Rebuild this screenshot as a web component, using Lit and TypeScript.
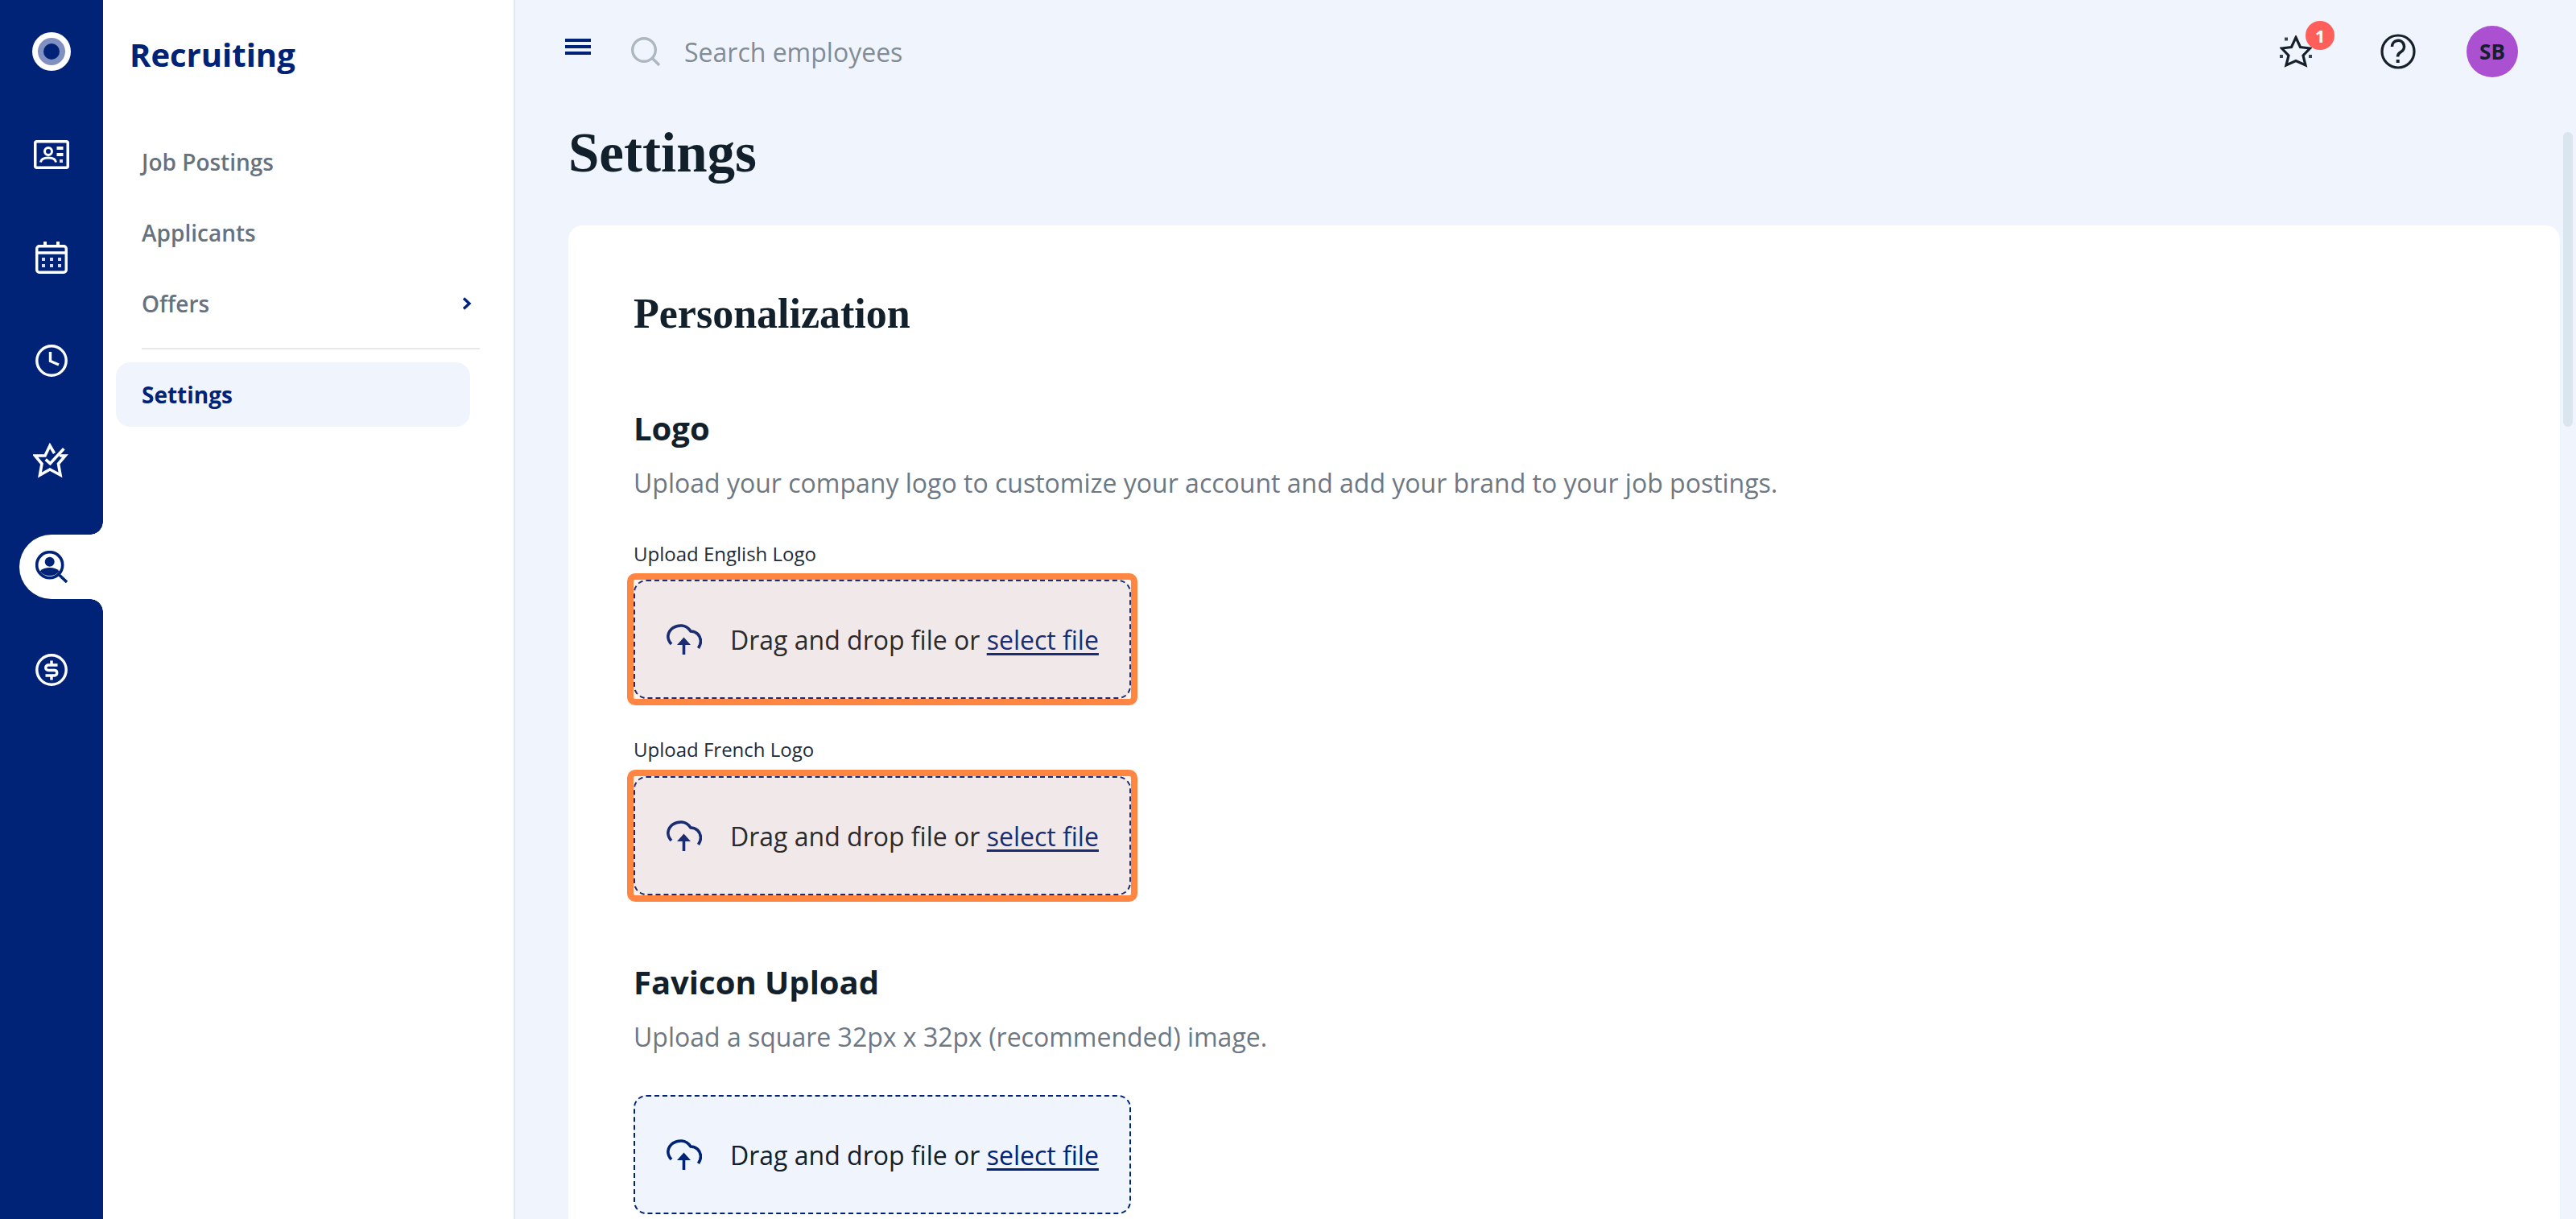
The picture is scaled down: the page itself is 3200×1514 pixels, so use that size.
import { LitElement, html, css } from "lit";
import { customElement } from "lit/decorators.js";

const navy = "#002378";

const logo = html`<svg width="48" height="48" viewBox="0 0 48 48"><circle cx="24" cy="24" r="24" fill="#fff"/><circle cx="24" cy="24" r="17" fill="#8090c0"/><circle cx="24" cy="24" r="10" fill="${navy}"/></svg>`;

const card = html`<svg width="44" height="36" viewBox="0 0 44 36" fill="none" stroke="#fff"><rect x="1.75" y="1.75" width="40.5" height="32.5" rx="2" stroke-width="3.5"/><circle cx="18" cy="14" r="4.5" stroke-width="3"/><path d="M8.5 27.5C9 23.5 12.5 22 18 22s9 1.5 9.5 5.5" stroke-width="3"/><path d="M28.5 10h8M28.5 18h8" stroke-width="4"/><rect x="32" y="24" width="4" height="4" fill="#dfe4f0" stroke="none"/></svg>`;

const calendar = html`<svg width="40" height="40" viewBox="0 0 40 40" fill="none" stroke="#fff"><rect x="1.75" y="5.75" width="36.5" height="32.5" rx="3" stroke-width="3.4"/><path d="M1.75 14h36.5" stroke-width="3.4"/><path d="M12 0v6M28 0v6" stroke-width="4"/><g fill="#d4daea" stroke="none"><rect x="8" y="20" width="4" height="4"/><rect x="18" y="20" width="4" height="4"/><rect x="28" y="20" width="4" height="4"/><rect x="8" y="28" width="4" height="4"/><rect x="18" y="28" width="4" height="4"/><rect x="28" y="28" width="4" height="4"/></g></svg>`;

const clock = html`<svg width="40" height="40" viewBox="0 0 40 40" fill="none" stroke="#fff" stroke-width="3.4"><circle cx="20" cy="20" r="18.2"/><path d="M18.5 9v11.5l10.5 4.5"/></svg>`;

const starCheck = html`<svg width="44" height="44" viewBox="0 0 44 44" fill="none" stroke="#fff" stroke-width="3.6"><path d="M26.5 13 21 3.5 15 16H2.5L11 26 8.5 40 21 33l13 7-2.5-14L40 16h-7"/><path d="M15.7 20.7l5.6 5L38.3 7.3"/></svg>`;

const personSearch = html`<svg width="40" height="40" viewBox="0 0 40 40" fill="none" stroke="${navy}"><circle cx="17.7" cy="17.7" r="16" stroke-width="3.6"/><circle cx="17.7" cy="13.7" r="6" fill="${navy}" stroke="none"/><path d="M5.5 25.5C9 22 13 21 17.7 21s8.7 1 12.2 4.5A16 16 0 0 1 5.5 25.5Z" fill="${navy}" stroke="none"/><path d="M29.5 30l9.5 9" stroke-width="3.6"/></svg>`;

const dollar = html`<svg width="40" height="40" viewBox="0 0 40 40" fill="none" stroke="#fff" stroke-width="3.4"><circle cx="20" cy="20" r="18.2"/><path d="M27.5 14H16a3 3 0 0 0 0 6.5h8a3.3 3.3 0 0 1 0 6.5H12.5"/><path d="M20 8.5V14M20 27v5.5"/></svg>`;

const chevron = html`<svg width="12" height="16" viewBox="0 0 12 16" fill="none" stroke="${navy}" stroke-width="3.4"><path d="M2 1.5 9 8l-7 6.5"/></svg>`;

const menu = html`<svg width="32" height="20" viewBox="0 0 32 20" fill="${navy}"><rect width="32" height="4"/><rect y="8" width="32" height="4"/><rect y="16" width="32" height="4"/></svg>`;

const search = html`<svg width="36" height="36" viewBox="0 0 36 36" fill="none" stroke="#aeb7bf" stroke-width="3.4"><circle cx="16" cy="16" r="14.3"/><path d="M26.5 26.5 35 35"/></svg>`;

const star = html`<svg width="40" height="40" viewBox="0 0 40 40" fill="none" stroke="#15202b" stroke-width="3.2"><path d="M20 2.5 25.5 14.5 37.5 16 29 25l3 12-12-5.5L8 37l3-12-8.5-9 12-1.5Z"/><g fill="#3a4650" stroke="none"><rect x="6" y="2.5" width="4" height="4"/><rect x="0" y="24" width="4" height="4"/><rect x="36" y="24" width="4" height="4"/></g></svg>`;

const help = html`<svg width="44" height="44" viewBox="0 0 44 44" fill="none" stroke="#15202b" stroke-width="3.2"><circle cx="22" cy="22" r="20"/><path d="M14.5 16a7.5 7.5 0 1 1 11 6.5c-3 1.7-4 3-4 6" stroke-width="3.6"/><rect x="19.7" y="32" width="4" height="4" fill="#15202b" stroke="none"/></svg>`;

const upload = html`<svg width="44" height="38" viewBox="0 0 44 38" fill="none" stroke="currentColor" stroke-width="3.6"><path d="M6 25C2.5 21 1.5 17 2 14 3.5 6 11 1.5 19 2c6 .5 9 4 11 7 7 0 12 5 12.5 12 0 4-1 6-3 9"/><path d="M21.5 38V22" stroke-width="3.6"/><path d="M21.5 16.5 30 26H13Z" fill="currentColor" stroke="none"/></svg>`;

@customElement("app-root")
export class AppRoot extends LitElement {
  static styles = css`
    :host { display: block; font-family: "Open Sans", sans-serif; color: #12202b; }
    .root { display: flex; height: 1514px; width: 3200px; overflow: hidden; background: #fff; }

    .rail { width: 128px; flex: none; background: #002378; box-sizing: border-box; padding-top: 24px; display: flex; flex-direction: column; gap: 48px; }
    .rail-item { height: 80px; display: flex; align-items: center; justify-content: center; position: relative; flex: none; }
    .rail-item.star svg { margin-top: -8px; margin-left: -2px; }
    .rail-item.active { background: #fff; margin-left: 24px; border-radius: 40px 0 0 40px; justify-content: flex-start; padding-left: 20px; }
    .rail-item.active::before, .rail-item.active::after { content: ""; position: absolute; right: 0; width: 16px; height: 16px; }
    .rail-item.active::before { top: -16px; background: radial-gradient(circle at 0 0, transparent 15.5px, #fff 16px); }
    .rail-item.active::after { bottom: -16px; background: radial-gradient(circle at 0 100%, transparent 15.5px, #fff 16px); }

    .side { width: 512px; flex: none; box-sizing: border-box; border-right: 2px solid #e3e8ef; padding-top: 40px; }
    .side h2 { margin: 0 0 61px 33px; font-size: 40px; line-height: 56px; font-weight: 700; color: #002378; }
    .nav-item { height: 88px; display: flex; align-items: center; justify-content: space-between; padding: 0 52px 0 48px; font-size: 28px; font-weight: 600; color: #66727d; }
    .divider { height: 2px; background: #e6e8eb; margin: 11px 42px 0 48px; }
    .pill { height: 80px; width: 440px; margin: 16px 0 0 16px; box-sizing: border-box; padding: 0 0 0 32px; display: flex; align-items: center; background: #f0f4fc; border-radius: 18px; font-size: 28px; font-weight: 700; color: #002378; }

    .main { flex: 1; min-width: 0; position: relative; background: #f0f4fc; box-sizing: border-box; padding: 0 20px 0 62px; }
    .top { height: 128px; display: flex; align-items: center; padding-right: 52px; }
    .menu { display: flex; margin-top: -12px; margin-right: 50px; }
    .search-ic { display: flex; margin-right: 30px; }
    .ph { font-size: 32px; color: #828c95; flex: 1; }
    .alert { position: relative; display: flex; margin-right: 85px; }
    .badge { position: absolute; left: 32px; top: -18px; width: 36px; height: 36px; border-radius: 50%; background: #ff5f5a; color: #fff; font-size: 22px; font-weight: 700; display: flex; align-items: center; justify-content: center; }
    .help { display: flex; margin-right: 63px; }
    .avatar { width: 64px; height: 64px; border-radius: 50%; background: #aa50d0; display: flex; align-items: center; justify-content: center; font-size: 26px; font-weight: 700; color: #15202b; }

    h1, .sec { font-family: "Liberation Serif", serif; font-weight: 700; color: #12202b; }
    h1 { margin: 22px 0 50px 4px; font-size: 69px; line-height: 80px; }
    .card { margin-left: 4px; background: #fff; border-radius: 18px 18px 0 0; padding: 80px 0 100px 81px; }
    .sec { margin: 0; font-size: 52px; line-height: 60px; }
    h3 { margin: 0; font-size: 40px; line-height: 52px; font-weight: 700; color: #12202b; }
    h3.logo { margin-top: 86px; }
    h3.fav { margin-top: 74px; }
    .desc { margin: 20px 0 0; font-size: 32px; line-height: 44px; color: #6d7883; }
    .lab { font-size: 24px; line-height: 32px; color: #1c2b3a; margin-bottom: 8px; }
    .lab.first { margin-top: 50px; }
    .lab.next { margin-top: 39px; margin-bottom: 9px; }
    .fav-wrap { margin-top: 42px; }

    .wrap { position: relative; width: 618px; border: 8px solid transparent; margin-left: -8px; border-radius: 10px; }
    .wrap.focus { border-color: #ff8642; }
    .wrap.focus::after { content: ""; position: absolute; inset: 0; background: rgba(255, 134, 66, 0.1); pointer-events: none; }
    .drop { box-sizing: border-box; height: 148px; border: 2px dashed #002378; border-radius: 16px; background: #f0f4fc; display: flex; align-items: center; padding-left: 39px; gap: 35px; font-size: 32px; color: #12202b; }
    .drop svg { color: #002378; flex: none; }
    .drop a { color: #002378; text-decoration: underline; text-underline-offset: 4px; }

    .thumb { position: absolute; right: 4px; top: 164px; width: 12px; height: 366px; border-radius: 6px; background: #dbe5ee; }
  `;

  private zone(focus: boolean) {
    return html`<div class="wrap ${focus ? "focus" : ""}">
      <div class="drop">${upload}<span>Drag and drop file or <a>select file</a></span></div>
    </div>`;
  }

  render() {
    return html`<div class="root">
      <nav class="rail">
        <div class="rail-item">${logo}</div>
        <div class="rail-item">${card}</div>
        <div class="rail-item">${calendar}</div>
        <div class="rail-item">${clock}</div>
        <div class="rail-item star">${starCheck}</div>
        <div class="rail-item active">${personSearch}</div>
        <div class="rail-item">${dollar}</div>
      </nav>
      <aside class="side">
        <h2>Recruiting</h2>
        <div class="nav-item">Job Postings</div>
        <div class="nav-item">Applicants</div>
        <div class="nav-item">Offers ${chevron}</div>
        <div class="divider"></div>
        <div class="pill">Settings</div>
      </aside>
      <main class="main">
        <header class="top">
          <span class="menu">${menu}</span>
          <span class="search-ic">${search}</span>
          <span class="ph">Search employees</span>
          <span class="alert">${star}<span class="badge">1</span></span>
          <span class="help">${help}</span>
          <span class="avatar">SB</span>
        </header>
        <h1>Settings</h1>
        <section class="card">
          <h2 class="sec">Personalization</h2>
          <h3 class="logo">Logo</h3>
          <p class="desc">Upload your company logo to customize your account and add your brand to your job postings.</p>
          <div class="lab first">Upload English Logo</div>
          ${this.zone(true)}
          <div class="lab next">Upload French Logo</div>
          ${this.zone(true)}
          <h3 class="fav">Favicon Upload</h3>
          <p class="desc">Upload a square 32px x 32px (recommended) image.</p>
          <div class="fav-wrap">${this.zone(false)}</div>
        </section>
        <div class="thumb"></div>
      </main>
    </div>`;
  }
}
